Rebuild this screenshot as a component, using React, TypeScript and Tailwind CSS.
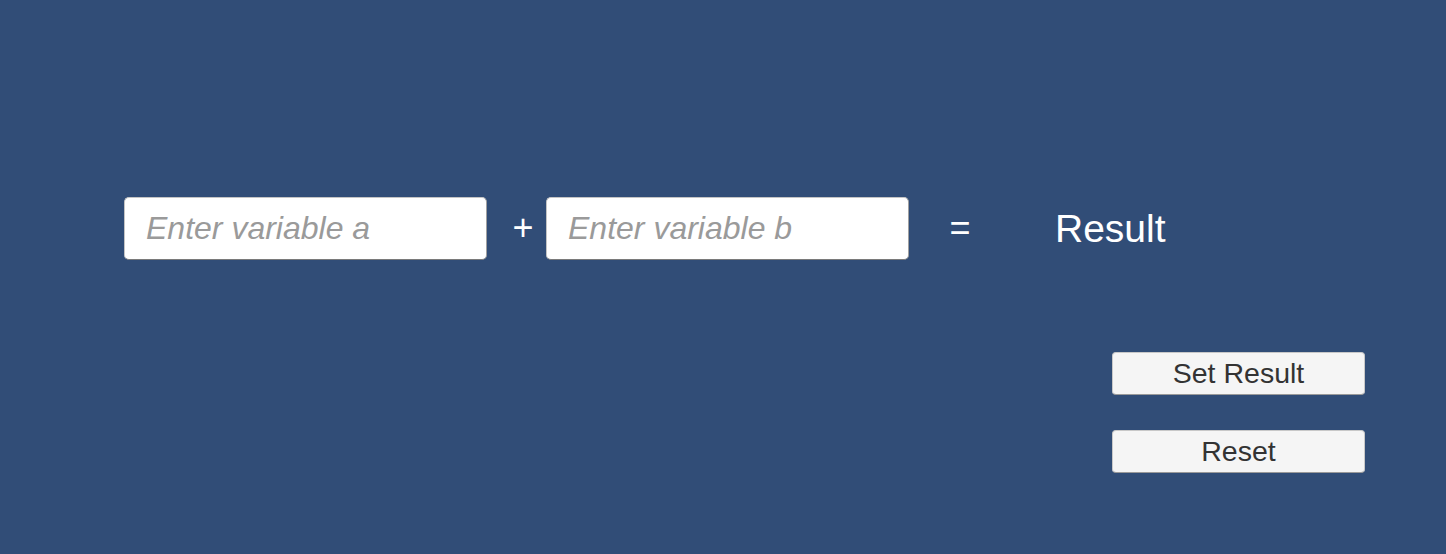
import { useState } from 'react';

const App = () => {
    const [a, setA] = useState("");
    const [b, setB] = useState("");
    const [result, setResult] = useState("Result");

    const handleSet = () => {
        const x = parseFloat(a);
        const y = parseFloat(b);
        if (!isNaN(x) && !isNaN(y)) setResult(String(x + y));
    };

    const handleReset = () => {
        setA("");
        setB("");
        setResult("Result");
    };

    const inputClass = "w-[363px] h-[63px] bg-white rounded-[5px] border border-[#c4c4c4] border-b-[#7a7a7a] border-r-[#a0a0a0] pl-[21px] pr-3 text-[32px] text-[#333] outline-none placeholder:italic placeholder:text-[#9a9a9a]";
    const buttonClass = "w-[253px] h-[43px] bg-[#f5f5f5] rounded-[4px] border border-[#c8c8c8] border-b-[#9a9a9a] text-[28.5px] leading-none text-[#333] flex items-center justify-center";

    return (
        <div className="w-full h-[554px] bg-[#314d77] font-['Liberation_Sans',Arial,sans-serif] overflow-hidden">
            {/* Equation row */}
            <div className="flex items-center pt-[197px] pl-[124px]">
                <input
                    value={a}
                    onChange={(e) => setA(e.target.value)}
                    placeholder="Enter variable a"
                    className={inputClass}
                />
                <div className="w-[59px] pl-[13px] text-center text-white text-[36px] leading-none pb-[2px]">+</div>
                <input
                    value={b}
                    onChange={(e) => setB(e.target.value)}
                    placeholder="Enter variable b"
                    className={inputClass}
                />
                <div className="w-[102px] text-center text-white text-[36px] leading-none pb-[2px]">=</div>
                <div className="ml-[44px] text-white text-[39px] leading-none">{result}</div>
            </div>

            {/* Buttons */}
            <div className="flex flex-col items-start pl-[1112px] mt-[92px] gap-[35px]">
                <button onClick={handleSet} className={buttonClass}>Set Result</button>
                <button onClick={handleReset} className={buttonClass}>Reset</button>
            </div>
        </div>
    );
};

export default App;
